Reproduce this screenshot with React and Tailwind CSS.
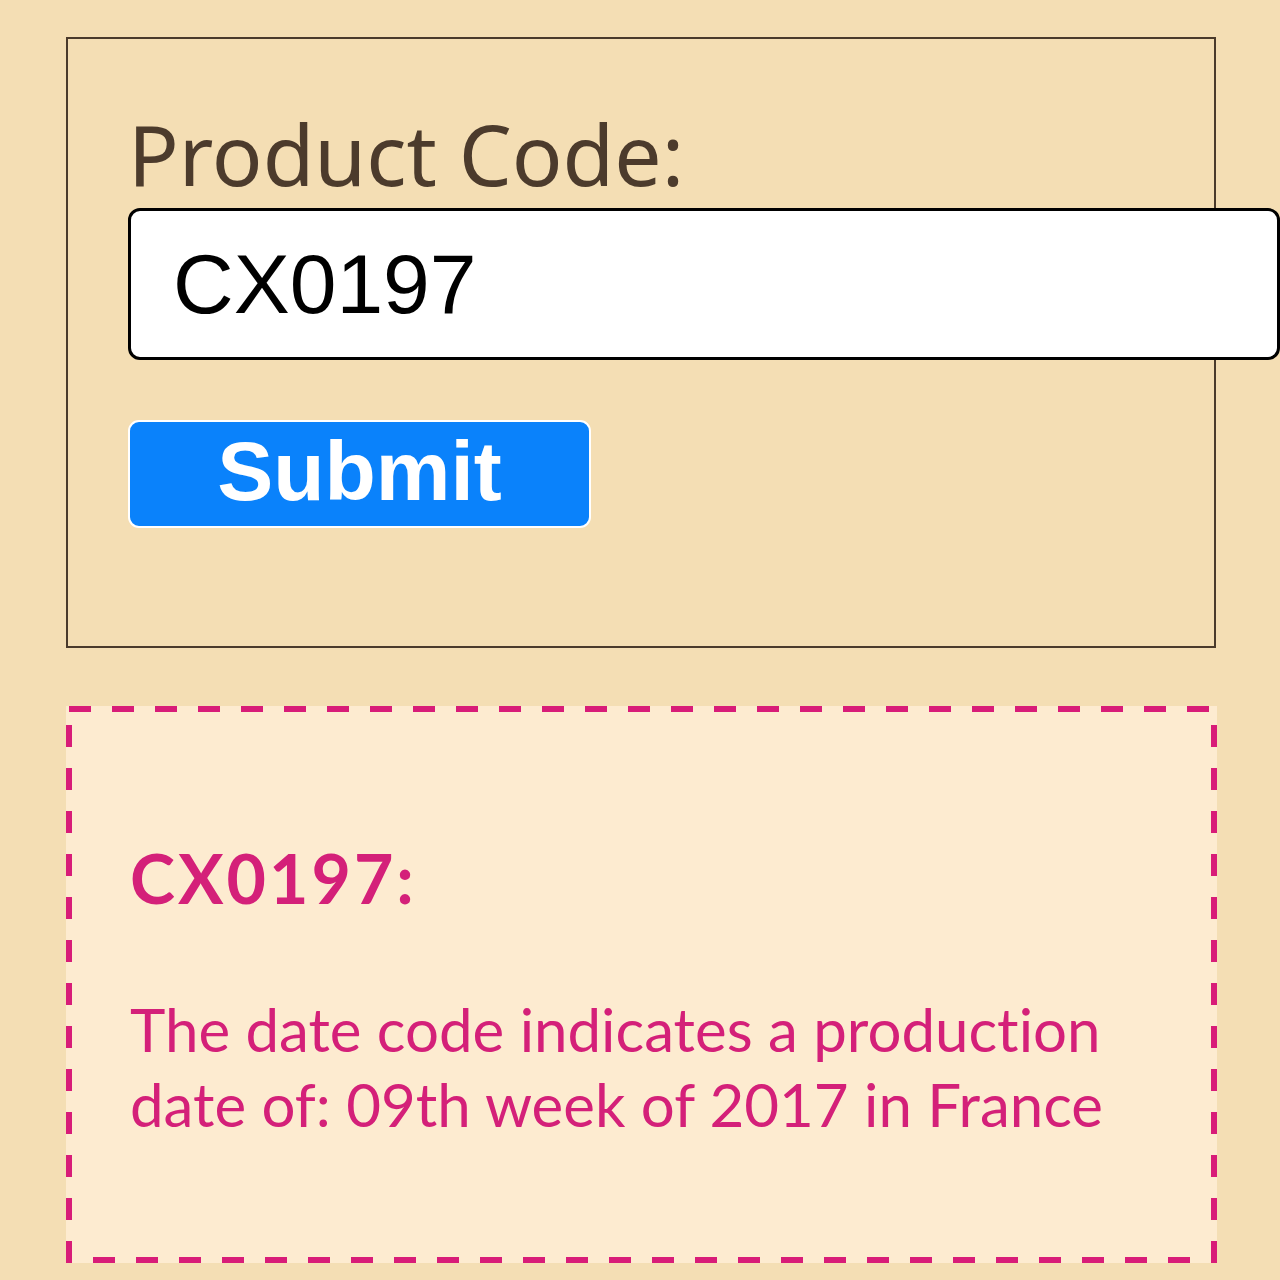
export default function App() {
  return (
    <div className="min-h-[1280px] bg-[#f4deb4] pt-[37px] pl-[66px] font-['Lato',sans-serif] [font-variant-ligatures:none]">
      {/* Form panel */}
      <div className="w-[1150px] h-[611px] border-2 border-[#4a3a2b] pl-[60px] pt-[61px]">
        <label className="block text-[84px] leading-[107px] text-[#4c3b2c] font-['Noto_Sans',sans-serif] font-normal">
          Product Code:
        </label>
        <input
          className="block w-[1152px] h-[152px] mt-[1px] bg-white border-[3px] border-black rounded-[12px] pl-[42px] text-[84px] text-black font-['Liberation_Sans',sans-serif] outline-none"
          defaultValue="CX0197"
        />
        <button className="mt-[60px] w-[463px] h-[108px] bg-[#0a82fb] border-2 border-white rounded-[11px] text-white text-[84px] font-bold leading-none font-['Liberation_Sans',sans-serif] pb-[6px]">
          Submit
        </button>
      </div>

      {/* Result panel */}
      <div className="relative mt-[58px] w-[1151px] h-[557px] bg-[#fdebd0] pl-[64px] pt-[132px] text-[#d42079]">
        <svg className="absolute inset-0 pointer-events-none" width="1151" height="557">
          <rect x="3" y="3" width="1145" height="551" fill="none" stroke="#d81c78" strokeWidth="6" strokeDasharray="22 21" />
        </svg>
        <div className="text-[68px] font-bold leading-[80px] tracking-[3px]">CX0197:</div>
        <p className="mt-[74px] text-[60px] leading-[75px] w-[1050px]">
          The date code indicates a production date of: 09th week of 2017 in France
        </p>
      </div>
    </div>
  );
}
